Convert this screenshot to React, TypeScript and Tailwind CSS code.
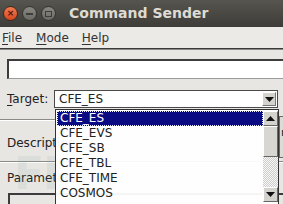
import React from "react";

const items = ["CFE_ES", "CFE_EVS", "CFE_SB", "CFE_TBL", "CFE_TIME", "COSMOS"];

function Ul({ c, rest }: { c: string; rest: string }) {
  return (
    <span>
      <span className="underline underline-offset-2">{c}</span>
      {rest}
    </span>
  );
}

function Arrow({ up }: { up?: boolean }) {
  return (
    <svg width="9" height="5" viewBox="0 0 9 5">
      <path d={up ? "M0 5 L4.5 0 L9 5 Z" : "M0 0 L9 0 L4.5 5 Z"} fill="#111" />
    </svg>
  );
}

export default function App() {
  return (
    <div
      className="relative w-[283px] h-[204px] overflow-hidden bg-[#e8e6e2] text-[12px] text-[#222]"
      style={{ fontFamily: '"DejaVu Sans", sans-serif' }}
    >
      {/* title bar */}
      <div className="h-[27px] flex items-center pl-[3px] bg-gradient-to-b from-[#57554f] to-[#3d3c38]">
        <div className="w-[15px] h-[15px] rounded-full bg-gradient-to-b from-[#f47a4f] to-[#d6461e] border border-[#3a2a22] flex items-center justify-center text-[9px] font-bold text-[#4a1a0a] leading-none">
          ×
        </div>
        <div className="ml-[4px] w-[15px] h-[15px] rounded-full bg-gradient-to-b from-[#8a8882] to-[#6c6a65] border border-[#35342f] flex items-center justify-center">
          <div className="w-[7px] h-[2px] bg-[#3e3d39]" />
        </div>
        <div className="ml-[4px] w-[15px] h-[15px] rounded-full bg-gradient-to-b from-[#8a8882] to-[#6c6a65] border border-[#35342f] flex items-center justify-center">
          <div className="w-[7px] h-[6px] border border-[#3e3d39]" />
        </div>
        <div className="ml-[13px] text-[14px] font-bold text-[#dfdbd2]">Command Sender</div>
      </div>

      {/* menu bar */}
      <div className="h-[21px] flex items-center bg-[#eceae6] text-[12px] text-[#333]">
        <div className="ml-[2px]"><Ul c="F" rest="ile" /></div>
        <div className="ml-[14px]"><Ul c="M" rest="ode" /></div>
        <div className="ml-[13px]"><Ul c="H" rest="elp" /></div>
      </div>
      <div className="h-[1px] bg-[#3a3a3a]" />
      <div className="h-[1px] bg-[#8a8884]" />

      {/* body */}
      <div className="pt-[9px]">
        <div className="ml-[7px] -mr-[10px] h-[20px] bg-white border-t-2 border-l-2 border-t-[#3c3c3c] border-l-[#3c3c3c] border-b border-b-[#9a9a9a]" />

        <div className="mt-[11px] flex items-center h-[18px]">
          <div className="ml-[7px] w-[47px]"><Ul c="T" rest="arget:" /></div>
          <div className="w-[224px] h-[18px] bg-white border border-[#4a4a4a] flex items-center">
            <div className="flex-1 pl-[4px]">CFE_ES</div>
            <div className="w-[14px] h-[14px] mr-[1px] bg-[#d4d2cc] border border-t-white border-l-white border-r-[#777] border-b-[#777] flex items-center justify-center">
              <Arrow />
            </div>
          </div>
        </div>

        <div className="mt-[11px] h-[1px] bg-[#8c8a86]" />
        <div className="h-[1px] bg-white" />
        <div className="mt-[15px] ml-[7px] leading-[15px]">Description:</div>
        <div className="mt-[10px] h-[1px] bg-[#8c8a86]" />
        <div className="h-[1px] bg-white" />
        <div className="mt-[8px] ml-[7px] leading-[15px]">Parameters:</div>
        <div className="mt-[7px] ml-[8px] h-[20px] bg-[#e8e6e2] border-t-2 border-l-2 border-[#3c3c3c]" />
      </div>

      {/* partially hidden control on the right */}
      <div className="absolute left-[279px] top-[116px] w-[12px] h-[42px] bg-[#dddbd6] border border-[#6a6a6a] text-[11px] leading-[15px] pl-[1px] pt-[8px]">
        r
      </div>

      {/* watermark */}
      <div className="absolute left-[14px] top-[152px] text-[44px] font-black leading-none text-[#7aa0a0] opacity-[0.12] tracking-[-1px] pointer-events-none">
        FREEBUF
      </div>

      {/* dropdown list */}
      <div className="absolute left-[55px] top-[109px] w-[224px] h-[100px] bg-white/95 border border-[#333] flex">
        <div className="flex-1 pt-[1px] pl-[1px]">
          {items.map((it, i) => (
            <div
              key={it}
              className={
                i === 0
                  ? "h-[15px] leading-[13px] pl-[2px] bg-[#0a0a82] text-white border border-dotted border-[#e8e8ff]"
                  : "h-[15px] leading-[15px] pl-[3px] text-[#222]"
              }
            >
              {it}
            </div>
          ))}
        </div>
        <div className="w-[15px] flex flex-col pt-[1px]">
          <div className="h-[15px] bg-[#d4d2cc] border border-t-white border-l-white border-r-[#666] border-b-[#666] flex items-center justify-center">
            <Arrow up />
          </div>
          <div className="h-[31px] bg-[#d8d6d0] border border-t-white border-l-white border-r-[#666] border-b-[#666]" />
          <div className="h-[30px] bg-[repeating-conic-gradient(#d0ceca_0_25%,#f6f6f6_0_50%)] bg-size-[2px_2px]" />
          <div className="h-[15px] bg-[#d4d2cc] border border-t-white border-l-white border-r-[#666] border-b-[#666] flex items-center justify-center">
            <Arrow />
          </div>
        </div>
      </div>
    </div>
  );
}
